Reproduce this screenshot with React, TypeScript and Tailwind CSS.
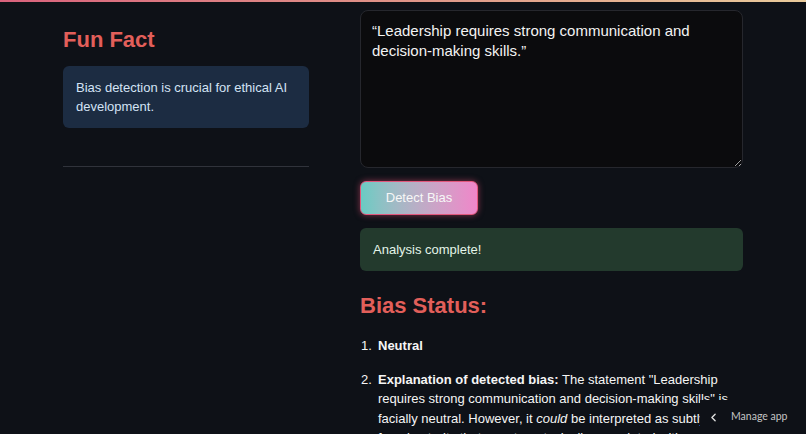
import { ChevronLeft } from 'lucide-react'

export default function App() {
    return (
        <div className="relative h-[434px] overflow-hidden bg-[#0e1117] font-['Liberation_Sans',Arial,sans-serif] text-[#f2f2f2]">
            <div className="h-[2px] bg-gradient-to-r from-[#d9627c] via-[#df9488] to-[#e9cb9b]" />

            <div className="flex gap-[51px] px-[63px]">
                {/* sidebar */}
                <aside className="w-[246px] shrink-0 pt-[24px]">
                    <h2 className="text-[22px] font-bold leading-[28px] text-[#e25f5a]">Fun Fact</h2>
                    <div className="mt-[12px] rounded-md bg-[#1c2c42] px-[13px] py-[12px] text-[13px] leading-[19px] text-[#d3e3f5]">
                        Bias detection is crucial for ethical AI development.
                    </div>
                    <hr className="mt-[38px] border-t border-[#30333b]" />
                </aside>

                {/* main */}
                <main className="w-[383px] shrink-0 pt-[8px]">
                    <textarea
                        readOnly
                        defaultValue={'\u201cLeadership requires strong communication and decision-making skills.\u201d'}
                        className="block h-[158px] w-full rounded-lg border border-[#26272d] bg-[#0b0b0d] px-[11px] py-[10px] text-[15px] leading-[20px] text-[#f3f3f3] outline-none"
                    />

                    <button className="mt-[13px] h-[34px] w-[118px] rounded-md border border-[#e2577c] bg-gradient-to-r from-[#69cbc3] to-[#ef86c9] text-[13px] text-[#f7f7f7] shadow-[0_0_6px_rgba(230,80,120,0.55)]">
                        Detect Bias
                    </button>

                    <div className="mt-[13px] flex h-[43px] items-center rounded-md bg-[#233a2d] px-[13px] text-[13px] text-[#e4f5e9]">
                        Analysis complete!
                    </div>

                    <h2 className="mt-[21px] text-[22px] font-bold leading-[28px] text-[#e25f5a]">Bias Status:</h2>

                    <ol className="mt-[16px] text-[13px] leading-[19.5px] text-[#f5f5f5]">
                        <li className="flex">
                            <span className="w-[18px] shrink-0 pl-[1px]">1.</span>
                            <strong>Neutral</strong>
                        </li>
                        <li className="mt-[14px] flex">
                            <span className="w-[18px] shrink-0 pl-[1px]">2.</span>
                            <div>
                                <strong>Explanation of detected bias:</strong> The statement "Leadership requires strong
                                communication and decision-making skills" is facially neutral. However, it <em>could</em> be
                                interpreted as subtly favoring traits that are stereotypically associated with certain groups.
                            </div>
                        </li>
                    </ol>
                </main>
            </div>

            <div className="absolute bottom-0 right-0 flex h-[34px] w-[106px] items-center bg-[#0e1117] pl-[7px] font-['Lato',sans-serif] text-[10.5px] text-[#c4c4c4]">
                <ChevronLeft className="h-[13px] w-[13px] text-[#e0e0e0]" strokeWidth={2.5} />
                <span className="ml-[11px]">Manage app</span>
            </div>
        </div>
    )
}
